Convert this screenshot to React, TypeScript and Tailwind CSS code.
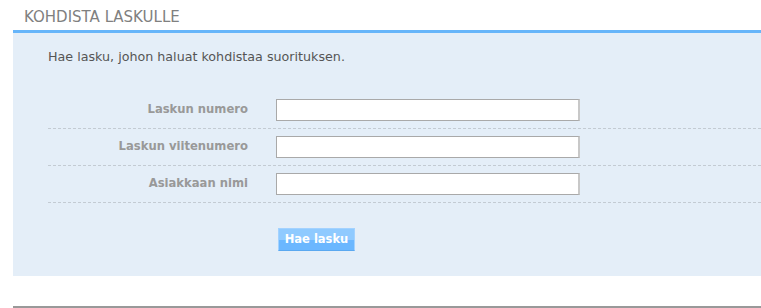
import React from "react";

const rows = ["Laskun numero", "Laskun viitenumero", "Asiakkaan nimi"];

function FormRow({ label }: { label: string }) {
  return (
    <div className="flex h-[37px] items-center border-b border-dashed border-[#c3cbd3]">
      <label className="w-[200px] text-right text-[11.6px] font-bold text-[#999]">
        {label}
      </label>
      <input
        type="text"
        className="ml-[28px] h-[22px] w-[304px] border border-[#a9a9a9] border-r-2 border-r-[#c8c8c8] bg-white px-1 text-[12px] outline-none"
      />
    </div>
  );
}

export default function App() {
  return (
    <div className="h-[308px] w-[761px] bg-white font-['DejaVu_Sans',sans-serif]">
      <div className="flex h-[30px] items-center pl-[24px] pt-[4px] text-[15px] leading-none text-[#808080]">
        KOHDISTA LASKULLE
      </div>
      <div className="ml-[13px] h-[246px] border-t-[3px] border-[#66b5fa] bg-[#e4eef8] pl-[35px]">
        <p className="h-[59px] pt-[14px] text-[12.7px] leading-[19px] text-[#555]">
          Hae lasku, johon haluat kohdistaa suorituksen.
        </p>
        <div>
          {rows.map((r) => (
            <FormRow key={r} label={r} />
          ))}
        </div>
        <div className="pl-[230px] pt-[25px]">
          <button
            type="button"
            className="block h-[23px] w-[77px] border border-[#a3d2ff] border-b-[#5aa8f0] bg-[linear-gradient(#8fcaff_0%,#8fcaff_50%,#6bb7ff_50%,#6bb7ff_100%)] text-[11.5px] font-bold text-white"
          >
            Hae lasku
          </button>
        </div>
      </div>
      <div className="ml-[13px] mt-[30px] h-[2px] bg-[#999]" />
    </div>
  );
}
